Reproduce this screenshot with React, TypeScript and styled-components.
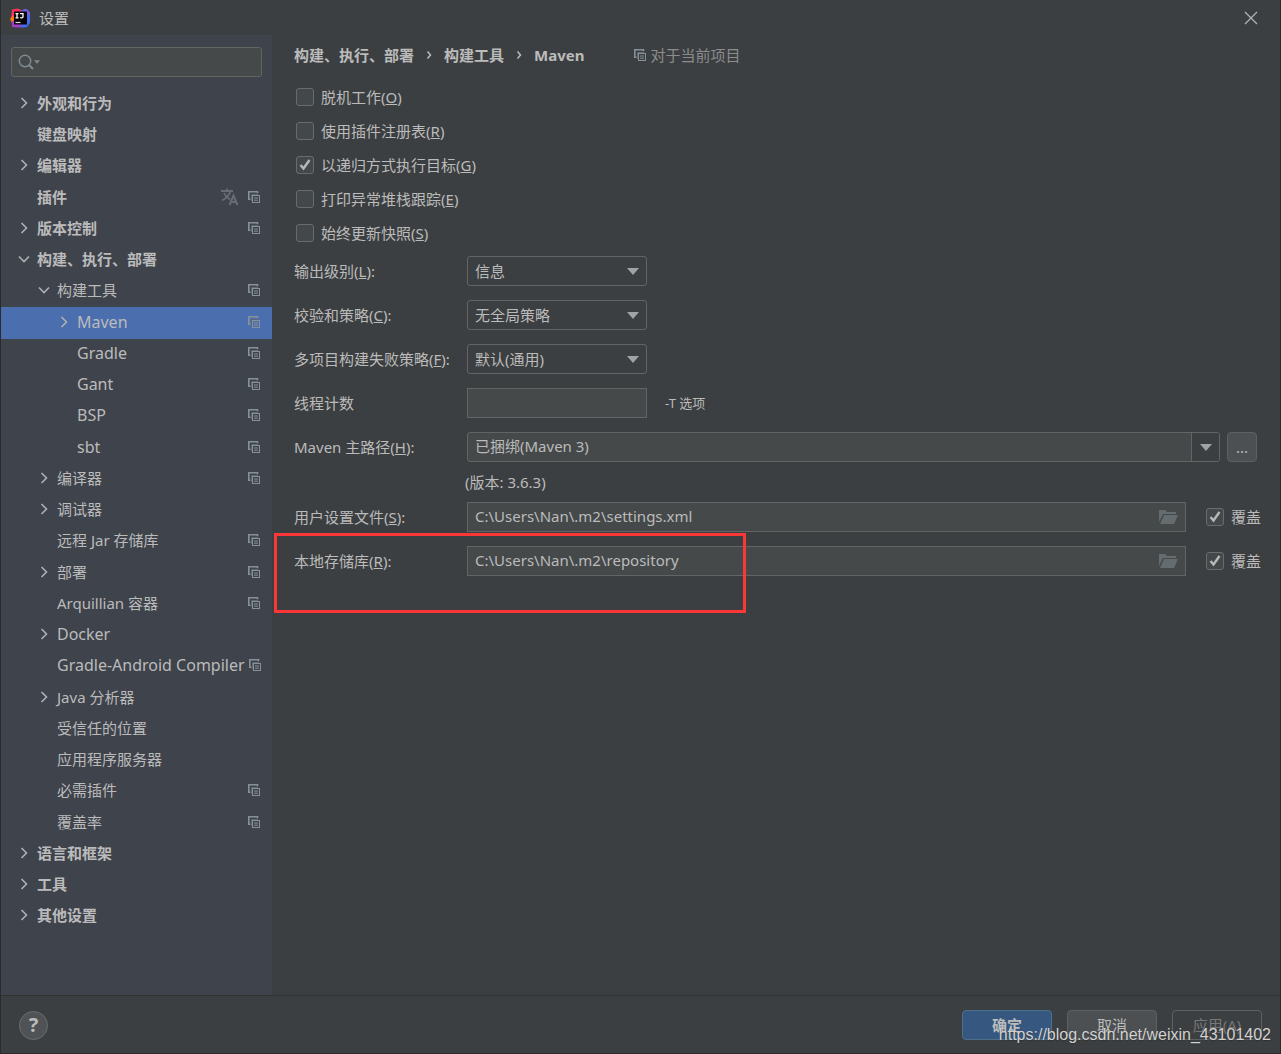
import React, { useState } from "react";
import styled, { createGlobalStyle } from "styled-components";

const Global = createGlobalStyle`
  * { box-sizing: border-box; }
  body {
    margin: 0;
    background: #3c3f41;
  }
  body, button, input, select {
    font-family: "Noto Sans", "Noto Sans CJK SC", sans-serif;
    font-size: 15px;
    line-height: 20px;
    color: #bbbbbb;
  }
  ul { list-style: none; margin: 0; padding: 0; }
`;

const Window = styled.div`
  display: flex;
  flex-direction: column;
  min-height: 100vh;
  border: 1px solid #2b2b2b;
  border-top: 0;
  background: #3c3f41;
`;

const TitleBar = styled.header`
  display: flex;
  align-items: center;
  height: 35px;
  padding: 0 20px 0 8px;
  gap: 8px;
`;

const Title = styled.h1`
  flex: 1;
  margin: 0;
  font-size: 15px;
  font-weight: 400;
`;

const PlainButton = styled.button`
  display: flex;
  align-items: center;
  justify-content: center;
  padding: 0;
  border: 0;
  background: transparent;
`;

const Body = styled.div`
  display: flex;
  flex: 1;
`;

const Sidebar = styled.nav`
  flex: 0 0 271px;
  min-width: 0;
  background: #3f434c;
`;

const SearchBox = styled.label`
  display: flex;
  align-items: center;
  height: 30px;
  margin: 12px 10px;
  padding: 0 6px;
  border: 1px solid #646464;
  border-radius: 3px;
  background: #45494a;
`;

const SearchInput = styled.input`
  flex: 1;
  min-width: 0;
  margin-left: 4px;
  padding: 0;
  border: 0;
  outline: 0;
  background: transparent;
`;

const Row = styled.li<{ $level: number; $selected?: boolean; $latin?: boolean }>`
  display: flex;
  align-items: center;
  height: 31px;
  padding: 0 12px 4px ${(p) => 14 + p.$level * 20}px;
  gap: 4px;
  white-space: nowrap;
  font-size: ${(p) => (p.$latin ? 16 : 15)}px;
  font-weight: ${(p) => (p.$level === 0 ? 700 : 400)};
  background: ${(p) => (p.$selected ? "#4b6eaf" : "transparent")};
  &:nth-child(4n) {
    height: 32px;
    padding-bottom: 2px;
  }
`;

const Twisty = styled.span`
  display: flex;
  flex: 0 0 18px;
  justify-content: center;
`;

const RowText = styled.span`
  flex: 1;
`;

const RowIcons = styled.span`
  display: flex;
  align-items: center;
  gap: 9px;
`;

const Main = styled.main`
  flex: 1;
  min-width: 0;
  padding: 10px 19px 20px 22px;
`;

const Crumbs = styled.div`
  display: flex;
  align-items: center;
  gap: 12px;
  height: 20px;
  font-weight: 700;
`;

const Scope = styled.span`
  display: flex;
  align-items: center;
  gap: 4px;
  margin-left: 38px;
  font-weight: 400;
  color: #8c8c8c;
`;

const Checks = styled.div`
  display: flex;
  flex-direction: column;
  margin-top: 15px;
  padding-left: 2px;
`;

const CheckLabel = styled.label<{ $tall?: boolean }>`
  display: flex;
  align-items: center;
  gap: 7px;
  height: ${(p) => (p.$tall ? 34 : 30)}px;
  white-space: nowrap;
`;

const CheckFrame = styled.span`
  display: grid;
  flex: 0 0 18px;
  height: 18px;
  > * { grid-area: 1 / 1; }
  > svg { pointer-events: none; visibility: hidden; }
  > input:checked + svg { visibility: visible; }
`;

const CheckInput = styled.input`
  appearance: none;
  width: 18px;
  height: 18px;
  margin: 0;
  border: 1px solid #6b6b6b;
  border-radius: 3px;
  background: #43494a;
`;

const Form = styled.div`
  display: flex;
  flex-direction: column;
  gap: 14px;
  margin-top: 6px;
`;

const Field = styled.div`
  display: grid;
  grid-template-columns: 173px 1fr;
  align-items: center;
  position: relative;
`;

const FieldLabel = styled.label`
  white-space: nowrap;
`;

const Controls = styled.div`
  display: flex;
  align-items: center;
  min-width: 0;
`;

const SelectFrame = styled.span`
  display: grid;
  align-items: center;
  width: 180px;
  > * { grid-area: 1 / 1; }
  > svg { justify-self: end; margin-right: 8px; pointer-events: none; }
`;

const Select = styled.select`
  appearance: none;
  width: 100%;
  height: 30px;
  padding: 0 24px 0 7px;
  border: 1px solid #646464;
  border-radius: 3px;
  background: #3c3f41;
`;

const TextBox = styled.div<{ $narrow?: boolean }>`
  display: flex;
  align-items: center;
  flex: ${(p) => (p.$narrow ? "0 0 180px" : "1")};
  min-width: 0;
  height: 30px;
  padding: 0 7px;
  border: 1px solid #646464;
  background: #45494a;
`;

const TextInput = styled.input`
  flex: 1;
  min-width: 0;
  padding: 0 0 2px;
  border: 0;
  outline: 0;
  background: transparent;
`;

const Combo = styled.div`
  display: flex;
  flex: 1;
  height: 30px;
  padding-left: 7px;
  border: 1px solid #646464;
  border-radius: 3px;
  background: #45494a;
  overflow: hidden;
`;

const ComboArrow = styled(PlainButton)`
  width: 28px;
  border-left: 1px solid #646464;
  background: #3c3f41;
`;

const MoreButton = styled.button`
  width: 30px;
  height: 30px;
  margin: 0 4px 0 7px;
  padding: 0;
  border: 1px solid #5e6060;
  border-radius: 4px;
  background: #4c5052;
`;

const Note = styled.span`
  margin-left: 18px;
  font-size: 13px;
`;

const Version = styled.p`
  margin: -4px 0 -4px 171px;
`;

const Override = styled.div`
  margin-left: 20px;
`;

const Highlight = styled.div`
  position: absolute;
  left: -20px;
  top: -13px;
  width: 472px;
  height: 80px;
  border: 3px solid #fb3737;
  pointer-events: none;
`;

const Footer = styled.footer`
  display: flex;
  align-items: center;
  gap: 15px;
  height: 58px;
  padding: 1px 18px 0;
  border-top: 1px solid #323232;
  position: relative;
`;

const Help = styled.button`
  width: 29px;
  height: 29px;
  margin-right: auto;
  padding: 0;
  border: 1px solid #6b6e70;
  border-radius: 50%;
  background: #4f5355;
  font-size: 20px;
  font-weight: 700;
`;

const ActionButton = styled.button<{ $kind?: "primary" | "disabled" }>`
  width: 90px;
  height: 30px;
  padding: 0;
  border: 1px solid ${(p) => (p.$kind === "primary" ? "#4c708c" : "#5e6060")};
  border-radius: 4px;
  color: ${(p) => (p.$kind === "disabled" ? "#777777" : "#bbbbbb")};
  font-weight: ${(p) => (p.$kind === "primary" ? 700 : 400)};
  background: ${(p) =>
    p.$kind === "primary" ? "#365880" : p.$kind === "disabled" ? "transparent" : "#4c5052"};
`;

const Watermark = styled.span`
  position: absolute;
  right: 9px;
  bottom: 8px;
  font-family: "Liberation Sans", sans-serif;
  font-size: 16px;
  line-height: 20px;
  color: #d2d2d2;
  text-shadow: 0 1px 1px #303030;
  pointer-events: none;
`;

const Logo = () => (
  <svg width="22" height="22" viewBox="0 0 22 22" aria-hidden="true">
    <path d="M3 2.500 9 1.500l5 2.500-3 9H2z" fill="#fe315d" />
    <path d="M1 12l3-4 3 7-4 1z" fill="#f97a12" />
    <path d="M12 4l3-2 3 .5 3 3v10l-3 4.500-6 .8-3-2z" fill="#3f6cf0" />
    <path d="M15 2l3 .5 3 3v3l-5-2z" fill="#7a5bd8" />
    <path d="M3 14h8l2 5-3 1.500-7-.5z" fill="#a33fc8" />
    <rect x="5" y="4.500" width="13" height="13" fill="#0a0508" />
    <path d="M6.500 6.700h3M8 6.700v4M6.500 10.800h3M11 6.700h3v3q0 1.500-2.800 1" fill="none" stroke="#fff" strokeWidth="1.300" />
    <path d="M6.500 15.500h5" stroke="#ddd" strokeWidth="1.200" />
  </svg>
);

const Chevron = ({ open }: { open?: boolean }) => (
  <svg width="12" height="12" viewBox="0 0 12 12" fill="none" stroke="#afb1b3" strokeWidth="1.600" aria-hidden="true">
    <path d={open ? "M1 3.500 6 8.500 11 3.500" : "M3.500 1 8.500 6 3.500 11"} />
  </svg>
);

const CrumbArrow = () => (
  <svg width="6" height="10" viewBox="0 0 6 10" fill="none" stroke="#bbbbbb" strokeWidth="1.500" aria-hidden="true">
    <path d="M1.500 1.500 4.500 5 1.500 8.500" />
  </svg>
);

const ProjectIcon = () => (
  <svg width="12" height="12" viewBox="0 0 12 12" fill="none" stroke="#87919a" aria-hidden="true">
    <path d="M2.500 8.300H.8V.8h8.700v1.500" strokeWidth="1.600" />
    <path d="M3.500 10V3.500H10" stroke="#5f6871" />
    <rect x="4.500" y="4.500" width="7" height="7" />
    <path d="M6 7h4M6 9.200h4" />
  </svg>
);

const LanguageIcon = () => (
  <svg width="18" height="18" viewBox="0 0 18 18" fill="none" stroke="#686d75" strokeWidth="1.800" aria-hidden="true">
    <path d="M0 3h12M6 .5V3M9.500 3C8.500 7 5 10.500 1 12.500M3 5c1 2.500 3 4.500 6 6.500" />
    <path d="M8.500 17l4-9.500 4 9.500M10 14h5" strokeWidth="2" />
  </svg>
);

const Triangle = ({ small }: { small?: boolean }) => (
  <svg width={small ? 6 : 12} height={small ? 4 : 7} viewBox="0 0 12 7" fill={small ? "#7f8b91" : "#a0a3a5"} aria-hidden="true">
    <path d="M0 0h12L6 7z" />
  </svg>
);

const SearchIcon = () => (
  <svg width="16" height="16" viewBox="0 0 16 16" fill="none" stroke="#7f8b91" aria-hidden="true">
    <circle cx="7" cy="7" r="5.700" strokeWidth="1.400" />
    <path d="M11 11l4 4" strokeWidth="2" />
  </svg>
);

const FolderIcon = () => (
  <svg width="19" height="14" viewBox="0 0 19 14" fill="#646c70" aria-hidden="true">
    <path d="M0 0h6l2 2h9v2H4L0 12z" />
    <path d="M5 5h14l-4 9H1z" />
  </svg>
);

const CheckMark = () => (
  <svg width="18" height="18" viewBox="0 0 18 18" fill="none" stroke="#b8b8b8" strokeWidth="2.400" aria-hidden="true">
    <path d="M4.500 9l3 3.500L13.500 4" />
  </svg>
);

type Item = { text: string; level: number; state?: "open" | "closed"; project?: boolean; language?: boolean };

const items: Item[] = [
  { text: "外观和行为", level: 0, state: "closed" },
  { text: "键盘映射", level: 0 },
  { text: "编辑器", level: 0, state: "closed" },
  { text: "插件", level: 0, project: true, language: true },
  { text: "版本控制", level: 0, state: "closed", project: true },
  { text: "构建、执行、部署", level: 0, state: "open" },
  { text: "构建工具", level: 1, state: "open", project: true },
  { text: "Maven", level: 2, state: "closed", project: true },
  { text: "Gradle", level: 2, project: true },
  { text: "Gant", level: 2, project: true },
  { text: "BSP", level: 2, project: true },
  { text: "sbt", level: 2, project: true },
  { text: "编译器", level: 1, state: "closed", project: true },
  { text: "调试器", level: 1, state: "closed" },
  { text: "远程 Jar 存储库", level: 1, project: true },
  { text: "部署", level: 1, state: "closed", project: true },
  { text: "Arquillian 容器", level: 1, project: true },
  { text: "Docker", level: 1, state: "closed" },
  { text: "Gradle-Android Compiler", level: 1, project: true },
  { text: "Java 分析器", level: 1, state: "closed" },
  { text: "受信任的位置", level: 1 },
  { text: "应用程序服务器", level: 1 },
  { text: "必需插件", level: 1, project: true },
  { text: "覆盖率", level: 1, project: true },
  { text: "语言和框架", level: 0, state: "closed" },
  { text: "工具", level: 0, state: "closed" },
  { text: "其他设置", level: 0, state: "closed" },
];

const isLatin = (text: string) => /^[\x20-\x7e]+$/.test(text);

const options = [
  { text: "脱机工作", hotkey: "O" },
  { text: "使用插件注册表", hotkey: "R" },
  { text: "以递归方式执行目标", hotkey: "G", on: true },
  { text: "打印异常堆栈跟踪", hotkey: "E" },
  { text: "始终更新快照", hotkey: "S" },
];

const selects = [
  { id: "level", text: "输出级别", hotkey: "L", value: "信息" },
  { id: "checksum", text: "校验和策略", hotkey: "C", value: "无全局策略" },
  { id: "fail", text: "多项目构建失败策略", hotkey: "F", value: "默认(通用)" },
];

const paths = [
  { id: "settings", text: "用户设置文件", hotkey: "S", value: "C:\\Users\\Nan\\.m2\\settings.xml" },
  { id: "repository", text: "本地存储库", hotkey: "R", value: "C:\\Users\\Nan\\.m2\\repository", marked: true },
];

const Mnemonic = ({ text, hotkey, colon }: { text: string; hotkey: string; colon?: boolean }) => (
  <span>{text}(<u>{hotkey}</u>){colon ? ":" : ""}</span>
);

const Check = ({ on, tall, children }: { on?: boolean; tall?: boolean; children: React.ReactNode }) => (
  <CheckLabel $tall={tall}>
    <CheckFrame>
      <CheckInput type="checkbox" defaultChecked={on} />
      <CheckMark />
    </CheckFrame>
    {children}
  </CheckLabel>
);

export default function App() {
  const [selected, setSelected] = useState("Maven");
  return (
    <>
      <Global />
      <Window>
        <TitleBar>
          <Logo />
          <Title>设置</Title>
          <PlainButton aria-label="关闭">
            <svg width="18" height="18" viewBox="0 0 18 18" stroke="#b4b4b4" strokeWidth="1.200" aria-hidden="true">
              <path d="M3 3l12 12M15 3L3 15" />
            </svg>
          </PlainButton>
        </TitleBar>
        <Body>
          <Sidebar>
            <SearchBox>
              <SearchIcon />
              <Triangle small />
              <SearchInput type="text" aria-label="搜索" />
            </SearchBox>
            <ul>
              {items.map((item) => (
                <Row
                  key={item.text}
                  $level={item.level}
                  $latin={isLatin(item.text)}
                  $selected={item.text === selected}
                  onClick={() => setSelected(item.text)}
                >
                  <Twisty>{item.state && <Chevron open={item.state === "open"} />}</Twisty>
                  <RowText>{item.text}</RowText>
                  <RowIcons>
                    {item.language && <LanguageIcon />}
                    {item.project && <ProjectIcon />}
                  </RowIcons>
                </Row>
              ))}
            </ul>
          </Sidebar>
          <Main>
            <Crumbs>
              <span>构建、执行、部署</span>
              <CrumbArrow />
              <span>构建工具</span>
              <CrumbArrow />
              <span>Maven</span>
              <Scope><ProjectIcon />对于当前项目</Scope>
            </Crumbs>
            <Checks>
              {options.map((o) => (
                <Check key={o.hotkey} on={o.on} tall>
                  <Mnemonic text={o.text} hotkey={o.hotkey} />
                </Check>
              ))}
            </Checks>
            <Form>
              {selects.map((s) => (
                <Field key={s.id}>
                  <FieldLabel htmlFor={s.id}><Mnemonic text={s.text} hotkey={s.hotkey} colon /></FieldLabel>
                  <SelectFrame>
                    <Select id={s.id}><option>{s.value}</option></Select>
                    <Triangle />
                  </SelectFrame>
                </Field>
              ))}
              <Field>
                <FieldLabel htmlFor="threads">线程计数</FieldLabel>
                <Controls>
                  <TextBox $narrow><TextInput id="threads" type="text" /></TextBox>
                  <Note>-T 选项</Note>
                </Controls>
              </Field>
              <Field>
                <FieldLabel htmlFor="home"><Mnemonic text="Maven 主路径" hotkey="H" colon /></FieldLabel>
                <Controls>
                  <Combo>
                    <TextInput id="home" type="text" defaultValue="已捆绑(Maven 3)" />
                    <ComboArrow aria-label="展开"><Triangle /></ComboArrow>
                  </Combo>
                  <MoreButton>...</MoreButton>
                </Controls>
              </Field>
              <Version>(版本: 3.6.3)</Version>
              {paths.map((p) => (
                <Field key={p.id}>
                  <FieldLabel htmlFor={p.id}><Mnemonic text={p.text} hotkey={p.hotkey} colon /></FieldLabel>
                  <Controls>
                    <TextBox>
                      <TextInput id={p.id} type="text" defaultValue={p.value} />
                      <PlainButton aria-label="浏览"><FolderIcon /></PlainButton>
                    </TextBox>
                    <Override><Check on>覆盖</Check></Override>
                  </Controls>
                  {p.marked && <Highlight />}
                </Field>
              ))}
            </Form>
          </Main>
        </Body>
        <Footer>
          <Help aria-label="帮助">?</Help>
          <ActionButton $kind="primary">确定</ActionButton>
          <ActionButton>取消</ActionButton>
          <ActionButton $kind="disabled" disabled>应用(A)</ActionButton>
          <Watermark>https://blog.csdn.net/weixin_43101402</Watermark>
        </Footer>
      </Window>
    </>
  );
}
